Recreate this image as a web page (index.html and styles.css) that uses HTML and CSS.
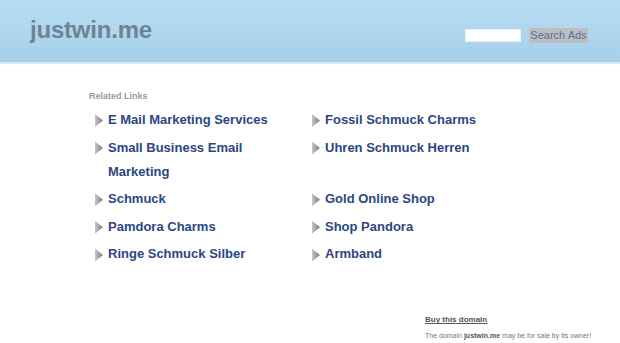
FILE: index.html
```html
<!DOCTYPE html>
<html>
<head>
<meta charset="utf-8">
<link rel="stylesheet" href="styles.css">
</head>
<body>
<header class="top">
  <div class="logo">justwin.me</div>
  <form class="search">
    <input class="search-input" type="text">
    <button class="search-btn" type="button">Search Ads</button>
  </form>
</header>
<main class="content">
  <div class="related-title">Related Links</div>
  <ul class="links">
    <li><span class="arrow"></span><a href="#">E Mail Marketing Services</a></li>
    <li><span class="arrow"></span><a href="#">Fossil Schmuck Charms</a></li>
    <li><span class="arrow"></span><a href="#">Small Business Email Marketing</a></li>
    <li><span class="arrow"></span><a href="#">Uhren Schmuck Herren</a></li>
    <li><span class="arrow"></span><a href="#">Schmuck</a></li>
    <li><span class="arrow"></span><a href="#">Gold Online Shop</a></li>
    <li><span class="arrow"></span><a href="#">Pamdora Charms</a></li>
    <li><span class="arrow"></span><a href="#">Shop Pandora</a></li>
    <li><span class="arrow"></span><a href="#">Ringe Schmuck Silber</a></li>
    <li><span class="arrow"></span><a href="#">Armband</a></li>
  </ul>
  <div class="sale">
    <a class="buy" href="#">Buy this domain</a>
    <div class="note">The domain <b>justwin.me</b> may be for sale by its owner!</div>
  </div>
</main>
</body>
</html>
```
FILE: styles.css
```css
html, body {
  margin: 0;
  padding: 0;
  background: #fff;
  font-family: "Liberation Sans", Arial, sans-serif;
}
.top {
  height: 62px;
  background: linear-gradient(#b6ddf3, #a7cfe7);
  border-bottom: 2px solid #d4eaf6;
  display: flex;
  align-items: flex-start;
  justify-content: space-between;
}
.logo {
  margin: 15px 0 0 30px;
  font-size: 24px;
  line-height: 30px;
  font-weight: bold;
  color: #6d8495;
  letter-spacing: -0.2px;
}
.search {
  display: flex;
  gap: 8px;
  margin: 28px 32px 0 0;
  align-items: center;
}
.search-input {
  width: 56px;
  height: 13px;
  border: 1px solid #e8f3fa;
  padding: 0;
  background: #fff;
  box-sizing: border-box;
}
.search-btn {
  height: 15px;
  width: 59px;
  padding: 0 1px;
  border: 0;
  background: #bbbfc3;
  color: #5b6d8a;
  font-family: "Liberation Sans", Arial, sans-serif;
  font-size: 11px;
  line-height: 15px;
}
.content {
  padding: 27px 0 0 89px;
}
.related-title {
  font-size: 9px;
  font-weight: bold;
  color: #9a9a9a;
  line-height: 11px;
}
.links {
  list-style: none;
  margin: 6px 0 0 6px;
  padding: 0;
  display: grid;
  grid-template-columns: 217px 217px;
  row-gap: 3.6px;
}
.links li {
  display: flex;
  align-items: flex-start;
  line-height: 24px;
  font-size: 13px;
  font-weight: bold;
}
.arrow {
  flex: none;
  width: 8px;
  height: 13px;
  margin: 6px 5px 0 0;
  background: linear-gradient(90deg, #c8c8c8, #7a7a7a);
  clip-path: polygon(0 0, 100% 50%, 0 100%);
}
.links a {
  color: #2c4682;
  text-decoration: none;
  max-width: 190px;
}
.sale {
  margin: 48px 0 0 336px;
}
.buy {
  display: block;
  font-size: 8px;
  font-weight: bold;
  color: #555;
  text-decoration: underline;
  line-height: 12px;
}
.note {
  margin-top: 5px;
  font-size: 7px;
  color: #777;
  line-height: 9px;
}
.note b {
  color: #555;
}
```
